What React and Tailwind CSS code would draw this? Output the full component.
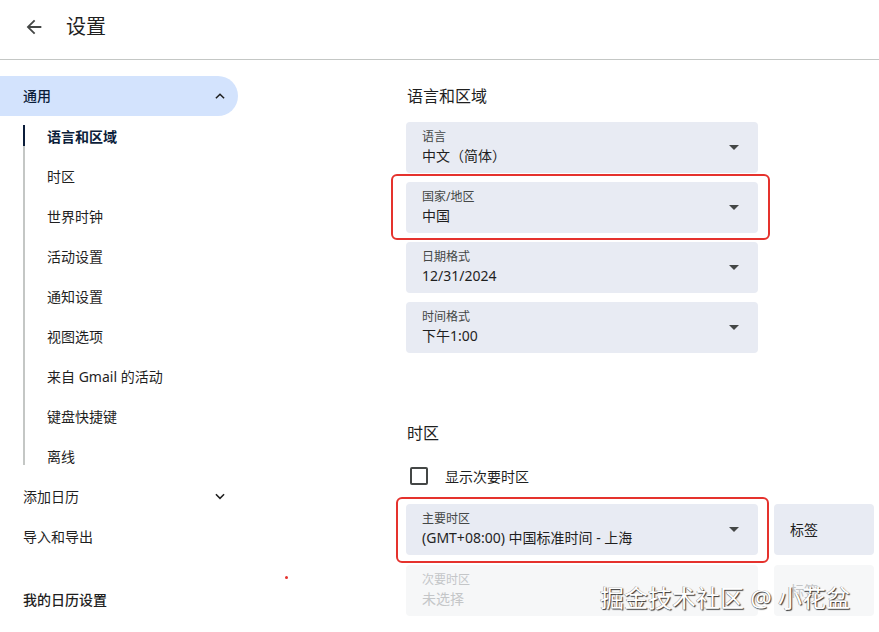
const font = { fontFamily: '"Noto Sans", "Noto Sans CJK SC", sans-serif' };

const subItems = [
  "语言和区域",
  "时区",
  "世界时钟",
  "活动设置",
  "通知设置",
  "视图选项",
  "来自 Gmail 的活动",
  "键盘快捷键",
  "离线",
];

function Caret() {
  return (
    <svg width="10" height="5" viewBox="0 0 10 5" className="shrink-0">
      <path d="M0 0 L10 0 L5 5 Z" fill="#444746" />
    </svg>
  );
}

function Chevron({ up }) {
  return (
    <svg width="14" height="14" viewBox="0 0 24 24" fill="none">
      <path
        d={up ? "M5 16 L12 9 L19 16" : "M5 9 L12 16 L19 9"}
        stroke="#1f1f1f"
        strokeWidth="2.6"
      />
    </svg>
  );
}

function Select({ label, value }) {
  return (
    <div className="w-[352px] h-[51px] bg-[#e8ebf3] rounded-[4px] flex items-center pl-4 pr-[19px]">
      <div className="flex-1 flex flex-col">
        <span className="text-[12px] leading-[16px] text-[#444746]">{label}</span>
        <span className="text-[14px] leading-[22px] text-[#1f1f1f]">{value}</span>
      </div>
      <Caret />
    </div>
  );
}

export default function App() {
  return (
    <div className="w-[879px] h-[632px] bg-white overflow-hidden relative" style={font}>
      <header className="h-[60px] border-b border-[#c4c7c5] flex items-center">
        <svg width="22" height="22" viewBox="0 0 24 24" className="ml-[23px] -mt-[6px]">
          <path d="M20 11H7.83l5.59-5.59L12 4l-8 8 8 8 1.41-1.41L7.83 13H20v-2z" fill="#444746" />
        </svg>
        <span className="ml-[21px] text-[20px] text-[#1f1f1f] -mt-[5px]">设置</span>
      </header>

      <div className="flex">
        <aside className="w-[260px] pt-[16px]">
          <div className="h-[40px] w-[238px] bg-[#d3e3fd] rounded-r-full flex items-center pl-[23px] pr-[11px] justify-between">
            <span className="text-[14px] font-medium text-[#0b1d3a] -mt-[1px]">通用</span>
            <Chevron up />
          </div>
          <div className="ml-[23px] relative">
            <div className="absolute left-0 top-[9px] bottom-[11px] w-[2px] bg-[#c4c7c5]" />
            {subItems.map((t, i) => (
              <div
                key={t}
                className={
                  "relative h-[40px] flex items-center pl-[24px] text-[14px] " +
                  (i === 0 ? "text-[#0b1d3a] font-semibold" : "text-[#1f1f1f]")
                }
              >
                {i === 0 && (
                  <span className="absolute left-0 top-[9px] h-[21px] w-[2px] bg-[#0b1d3a]" />
                )}
                {t}
              </div>
            ))}
          </div>
          <div className="h-[40px] w-[238px] flex items-center justify-between pl-[23px] pr-[11px]">
            <span className="text-[14px] text-[#1f1f1f]">添加日历</span>
            <Chevron />
          </div>
          <div className="h-[40px] flex items-center pl-[23px]">
            <span className="text-[14px] text-[#1f1f1f]">导入和导出</span>
          </div>
          <div className="h-[48px] flex items-end pl-[23px] mt-[6px]">
            <span className="text-[14px] font-medium text-[#1f1f1f]">我的日历设置</span>
          </div>
        </aside>

        <main className="flex-1 pl-[146px] pt-[24px]">
          <h2 className="text-[16px] text-[#1f1f1f] leading-[24px] ml-[1px]">语言和区域</h2>
          <div className="mt-[14px] flex flex-col gap-[9px]">
            <Select label="语言" value="中文（简体）" />
            <div className="relative">
              <Select label="国家/地区" value="中国" />
              <div className="absolute -left-[15px] -top-[8px] w-[379px] h-[66px] border-2 border-[#e5322d] rounded-[6px] pointer-events-none" />
            </div>
            <Select label="日期格式" value="12/31/2024" />
            <Select label="时间格式" value="下午1:00" />
          </div>

          <h2 className="mt-[68px] text-[16px] text-[#1f1f1f] leading-[24px] ml-[1px]">时区</h2>
          <label className="mt-[22px] flex items-center h-[18px] ml-[4px]">
            <span className="w-[18px] h-[18px] border-2 border-[#444746] rounded-[2px]" />
            <span className="ml-[17px] text-[14px] text-[#1f1f1f]">显示次要时区</span>
          </label>
          <div className="mt-[19px] flex gap-[16px]">
            <div className="relative">
              <Select label="主要时区" value="(GMT+08:00) 中国标准时间 - 上海" />
              <div className="absolute -left-[10px] -top-[7px] w-[373px] h-[66px] border-2 border-[#e5322d] rounded-[6px] pointer-events-none" />
            </div>
            <div className="w-[100px] h-[51px] bg-[#e8ebf3] rounded-[4px] flex items-center pl-[16px] text-[14px] text-[#1f1f1f]">
              标签
            </div>
          </div>
          <div className="mt-[10px] flex gap-[16px]">
            <div className="w-[352px] h-[51px] bg-[#f6f7f8] rounded-[4px] flex flex-col justify-center pl-4">
              <span className="text-[12px] leading-[16px] text-[#c4c6c8]">次要时区</span>
              <span className="text-[14px] leading-[22px] text-[#c4c6c8]">未选择</span>
            </div>
            <div className="w-[100px] h-[51px] bg-[#f6f7f8] rounded-[4px] flex items-center pl-[16px] text-[14px] text-[#c4c6c8]">
              标签
            </div>
          </div>
        </main>
      </div>

      <div className="absolute left-[285px] top-[576px] w-[3px] h-[3px] rounded-full bg-[#e5322d]" />
      <div
        className="absolute left-[600px] top-[582px] text-[24px] leading-[32px] text-white"
        style={{ textShadow: "1px 1px 1px #333, -0.5px -0.5px 0 #888" }}
      >
        掘金技术社区 @ 小花盆
      </div>
    </div>
  );
}
